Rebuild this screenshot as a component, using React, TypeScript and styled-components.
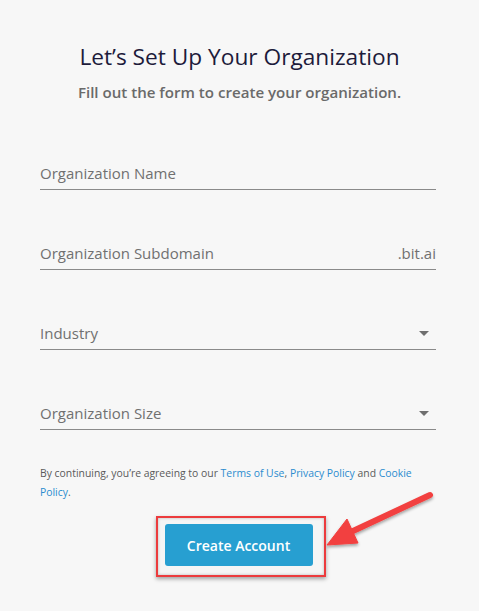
import React from "react";
import styled, { createGlobalStyle } from "styled-components";

const Global = createGlobalStyle`
  html, body { margin: 0; padding: 0; background: #f7f7f7; }
  body { font-family: "Open Sans", "Noto Sans", sans-serif; }
`;

const Page = styled.div`
  position: relative;
  width: 479px;
  height: 611px;
  background: #f7f7f7;
  overflow: hidden;
`;

const Header = styled.header`
  display: flex;
  flex-direction: column;
  align-items: center;
  padding-top: 42px;
  gap: 10px;
`;

const Title = styled.h1`
  margin: 0;
  font-size: 22.7px;
  font-weight: 400;
  line-height: 30px;
  color: #1d1b3b;
`;

const Subtitle = styled.p`
  margin: 0;
  font-size: 15.1px;
  font-weight: 600;
  line-height: 20px;
  color: #6a6a6a;
`;

const Form = styled.form`
  display: flex;
  flex-direction: column;
  margin: 61px 43px 0 40px;
  gap: 53px;
`;

const Field = styled.div`
  display: flex;
  align-items: center;
  justify-content: space-between;
  height: 20px;
  padding-bottom: 6px;
  border-bottom: 1px solid #8a8a8a;
  font-size: 15px;
  color: #707070;
`;

const Label = styled.span`
  line-height: 20px;
`;

const Suffix = styled.span`
  line-height: 20px;
  color: #707070;
`;

const Caret = styled.span`
  width: 0;
  height: 0;
  margin-right: 7px;
  border-left: 5px solid transparent;
  border-right: 5px solid transparent;
  border-top: 5px solid #6f6f6f;
`;

const Terms = styled.p`
  margin: 34px 46px 0 40px;
  font-size: 10.4px;
  line-height: 19px;
  color: #5a5a5a;
`;

const Link = styled.a`
  color: #2b8ccf;
  text-decoration: none;
`;

const Actions = styled.div`
  display: flex;
  justify-content: center;
  margin-top: 14px;
  padding-left: 2px;
`;

const Highlight = styled.div`
  display: flex;
  padding: 6px 11px 9px 7px;
  border: 2px solid #ec3b3d;
  box-shadow: 0 2px 4px rgba(0, 0, 0, 0.35), inset 0 0 3px rgba(0, 0, 0, 0.25);
  background: #f5f5f5;
`;

const Button = styled.button`
  width: 148px;
  height: 42px;
  border: none;
  border-radius: 3px;
  background: #279fd1;
  color: #ffffff;
  font-family: "Open Sans", sans-serif;
  font-size: 14px;
  font-weight: 600;
  cursor: pointer;
`;

const Arrow = styled.svg`
  position: absolute;
  left: 320px;
  top: 485px;
  overflow: visible;
`;

export default function App() {
  return (
    <Page>
      <Global />
      <Header>
        <Title>Let’s Set Up Your Organization</Title>
        <Subtitle>Fill out the form to create your organization.</Subtitle>
      </Header>
      <Form>
        <Field>
          <Label>Organization Name</Label>
        </Field>
        <Field>
          <Label>Organization Subdomain</Label>
          <Suffix>.bit.ai</Suffix>
        </Field>
        <Field>
          <Label>Industry</Label>
          <Caret />
        </Field>
        <Field>
          <Label>Organization Size</Label>
          <Caret />
        </Field>
      </Form>
      <Terms>
        By continuing, you’re agreeing to our <Link>Terms of Use</Link>,{" "}
        <Link>Privacy Policy</Link> and <Link>Cookie Policy</Link>.
      </Terms>
      <Actions>
        <Highlight>
          <Button type="button">Create Account</Button>
        </Highlight>
      </Actions>
      <Arrow width="120" height="70" viewBox="0 0 120 70">
        <defs>
          <filter id="sh" x="-20%" y="-20%" width="140%" height="140%">
            <feDropShadow dx="0" dy="2" stdDeviation="1.5" floodColor="#000" floodOpacity="0.35" />
          </filter>
        </defs>
        <g filter="url(#sh)" fill="#f2403f" stroke="#f2403f">
          <line x1="110" y1="10" x2="33" y2="46" strokeWidth="6" strokeLinecap="round" />
          <polygon points="7,60 27,34 38,58" strokeWidth="1" strokeLinejoin="round" />
        </g>
      </Arrow>
    </Page>
  );
}
